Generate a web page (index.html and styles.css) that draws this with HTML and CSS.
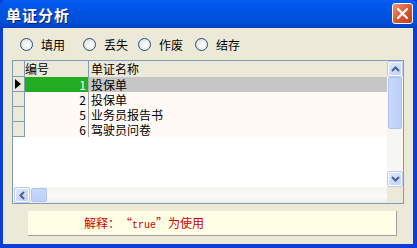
FILE: index.html
```html
<!DOCTYPE html>
<html lang="zh-CN">
<head>
    <meta charset="UTF-8">
    <title>单证分析</title>
    <link rel="stylesheet" href="styles.css">
</head>
<body>
    <div class="window">
        <div class="titlebar">
            <span class="title">单证分析</span>
            <div class="close">
                <svg width="13" height="13" viewBox="0 0 13 13">
                    <path d="M2 2 L11 11 M11 2 L2 11" stroke="#fff" stroke-width="2.2" stroke-linecap="round"/>
                </svg>
            </div>
        </div>
        <div class="client">
            <div class="radios">
                <label class="radio"><span class="dot"></span>填用</label>
                <label class="radio"><span class="dot"></span>丢失</label>
                <label class="radio"><span class="dot"></span>作废</label>
                <label class="radio"><span class="dot"></span>结存</label>
            </div>

            <div class="grid">
                <div class="grid-main">
                    <div class="grid-view">
                        <div class="row head">
                            <div class="ind"></div>
                            <div class="c1">编号</div>
                            <div class="c2">单证名称</div>
                        </div>
                        <div class="row current">
                            <div class="ind"><span class="arrow"></span></div>
                            <div class="c1">1</div>
                            <div class="c2">投保单</div>
                        </div>
                        <div class="row">
                            <div class="ind"></div>
                            <div class="c1">2</div>
                            <div class="c2">投保单</div>
                        </div>
                        <div class="row">
                            <div class="ind"></div>
                            <div class="c1">5</div>
                            <div class="c2">业务员报告书</div>
                        </div>
                        <div class="row">
                            <div class="ind"></div>
                            <div class="c1">6</div>
                            <div class="c2">驾驶员问卷</div>
                        </div>
                        <div class="empty"></div>
                    </div>
                    <div class="vscroll">
                        <div class="sbtn">
                            <svg width="9" height="6" viewBox="0 0 9 6"><path d="M1 5 L4.5 1.5 L8 5" fill="none" stroke="#4d6185" stroke-width="2"/></svg>
                        </div>
                        <div class="vthumb"></div>
                        <div class="vtrack"></div>
                        <div class="sbtn">
                            <svg width="9" height="6" viewBox="0 0 9 6"><path d="M1 1 L4.5 4.5 L8 1" fill="none" stroke="#4d6185" stroke-width="2"/></svg>
                        </div>
                    </div>
                </div>
                <div class="hscroll-row">
                    <div class="hscroll">
                        <div class="sbtn">
                            <svg width="6" height="9" viewBox="0 0 6 9"><path d="M5 1 L1.5 4.5 L5 8" fill="none" stroke="#4d6185" stroke-width="2"/></svg>
                        </div>
                        <div class="hthumb"></div>
                    </div>
                    <div class="corner"></div>
                </div>
            </div>

            <div class="note">解释：<span class="q q-open">“</span><span class="mono">true</span><span class="q q-close">”</span>为使用</div>
        </div>
    </div>
</body>
</html>
```
FILE: styles.css
```css
body {
    margin: 0;
    padding: 0;
    font-family: "Noto Sans CJK SC", sans-serif;
    font-size: 12px;
}

.window {
    width: 417px;
    height: 248px;
    display: flex;
    flex-direction: column;
    background: #0a3ed6;
}

.titlebar {
    height: 28px;
    display: flex;
    align-items: center;
    justify-content: space-between;
    padding: 0 4px 0 6px;
    background: linear-gradient(#0a5fef 0%, #0058ee 12%, #0054e3 40%, #0050d8 80%, #003fc0 100%);
    border-radius: 6px 6px 0 0;
}

.title {
    color: #fff;
    font-weight: bold;
    font-size: 15px;
    letter-spacing: 1px;
    text-shadow: 1px 1px 0 #0a1e6e;
}

.close {
    width: 19px;
    height: 19px;
    border: 1px solid #fff;
    border-radius: 3px;
    background: linear-gradient(135deg, #f0977a, #d85a35 50%, #c03a18);
    display: flex;
    align-items: center;
    justify-content: center;
    margin-top: -2px;
}

.client {
    flex: 1;
    margin: 0 4px 4px 3px;
    background: #ece9d8;
    color: #000;
}

.radios {
    display: flex;
    align-items: center;
    padding: 10px 0 0 17px;
    height: 13px;
}

.radio {
    display: flex;
    align-items: center;
    gap: 8px;
    margin-right: 18px;
}

.radio:nth-child(2) { margin-right: 10px; }
.radio:nth-child(3) { margin-right: 12px; }

.dot {
    width: 11px;
    height: 11px;
    border: 1px solid #1c5180;
    border-radius: 50%;
    background: radial-gradient(circle at 65% 65%, #fff 0%, #f3f2ee 40%, #d6d4c9 100%);
}

.grid {
    width: 390px;
    margin: 9px 0 0 9px;
    border: 1px solid #7f9db9;
}

.grid-main {
    display: flex;
    height: 126px;
}

.grid-view {
    flex: 1;
    display: flex;
    flex-direction: column;
    background: #fff;
}

.row {
    display: flex;
    height: 15px;
    line-height: 15px;
    background: #fffaf5;
    overflow: hidden;
}

.row .ind {
    width: 12px;
    border-right: 1px solid #7f9db9;
    border-bottom: 1px solid #7f9db9;
    box-sizing: border-box;
    background: #ece9d8;
    display: flex;
    align-items: center;
    padding-left: 2px;
}

.row .c1 {
    width: 64px;
    text-align: right;
    padding-right: 2px;
    box-sizing: border-box;
    border-right: 1px solid #a8a8a8;
}

.row .c2 {
    flex: 1;
    padding-left: 2px;
}

.row.head {
    height: 16px;
    line-height: 16px;
    background: #ece9d8;
}

.row.head .c1 {
    text-align: left;
    border-right-color: #7f9db9;
}

.row.current .c1 {
    background: #22ac22;
    color: #fff;
}

.row.current .c2 {
    background: #c6c6c6;
}

.arrow {
    width: 0;
    height: 0;
    border-top: 5px solid transparent;
    border-bottom: 5px solid transparent;
    border-left: 6px solid #000;
}

.empty {
    flex: 1;
    background: #fff;
}

.vscroll {
    width: 16px;
    display: flex;
    flex-direction: column;
    background: #f6f6f2;
}

.sbtn {
    width: 14px;
    height: 14px;
    margin: 1px;
    border: 1px solid #fff;
    border-radius: 2px;
    box-sizing: border-box;
    background: linear-gradient(135deg, #dce7fd, #bcd0f7);
    display: flex;
    align-items: center;
    justify-content: center;
    box-shadow: 0 0 0 1px #b7c8ee;
}

.vthumb {
    height: 50px;
    margin: 0 1px;
    border: 1px solid #b2c4ee;
    border-radius: 2px;
    background: linear-gradient(90deg, #c9d8fb, #bccff8);
}

.vtrack {
    flex: 1;
}

.hscroll-row {
    display: flex;
    height: 16px;
}

.hscroll {
    flex: 1;
    display: flex;
    padding-left: 1px;
    background: linear-gradient(#f4f3ee, #fbfbf9 60%, #eeede5);
}

.hthumb {
    width: 14px;
    margin: 1px 1px;
    border: 1px solid #b2c4ee;
    border-radius: 2px;
    background: linear-gradient(#c9d8fb, #bccff8);
}

.corner {
    width: 16px;
    background: #ece9d8;
}

.note {
    width: 312px;
    height: 24px;
    margin: 7px 0 0 25px;
    padding-left: 56px;
    background: #ffffe6;
    border-right: 1px solid #a0a0a0;
    border-bottom: 1px solid #a0a0a0;
    color: #d00000;
    line-height: 24px;
}

.q {
    display: inline-block;
    width: 12px;
}

.q-open {
    text-align: right;
}

.q-close {
    text-align: left;
}

.mono {
    font-family: "Liberation Mono", monospace;
    font-size: 10px;
}
```
